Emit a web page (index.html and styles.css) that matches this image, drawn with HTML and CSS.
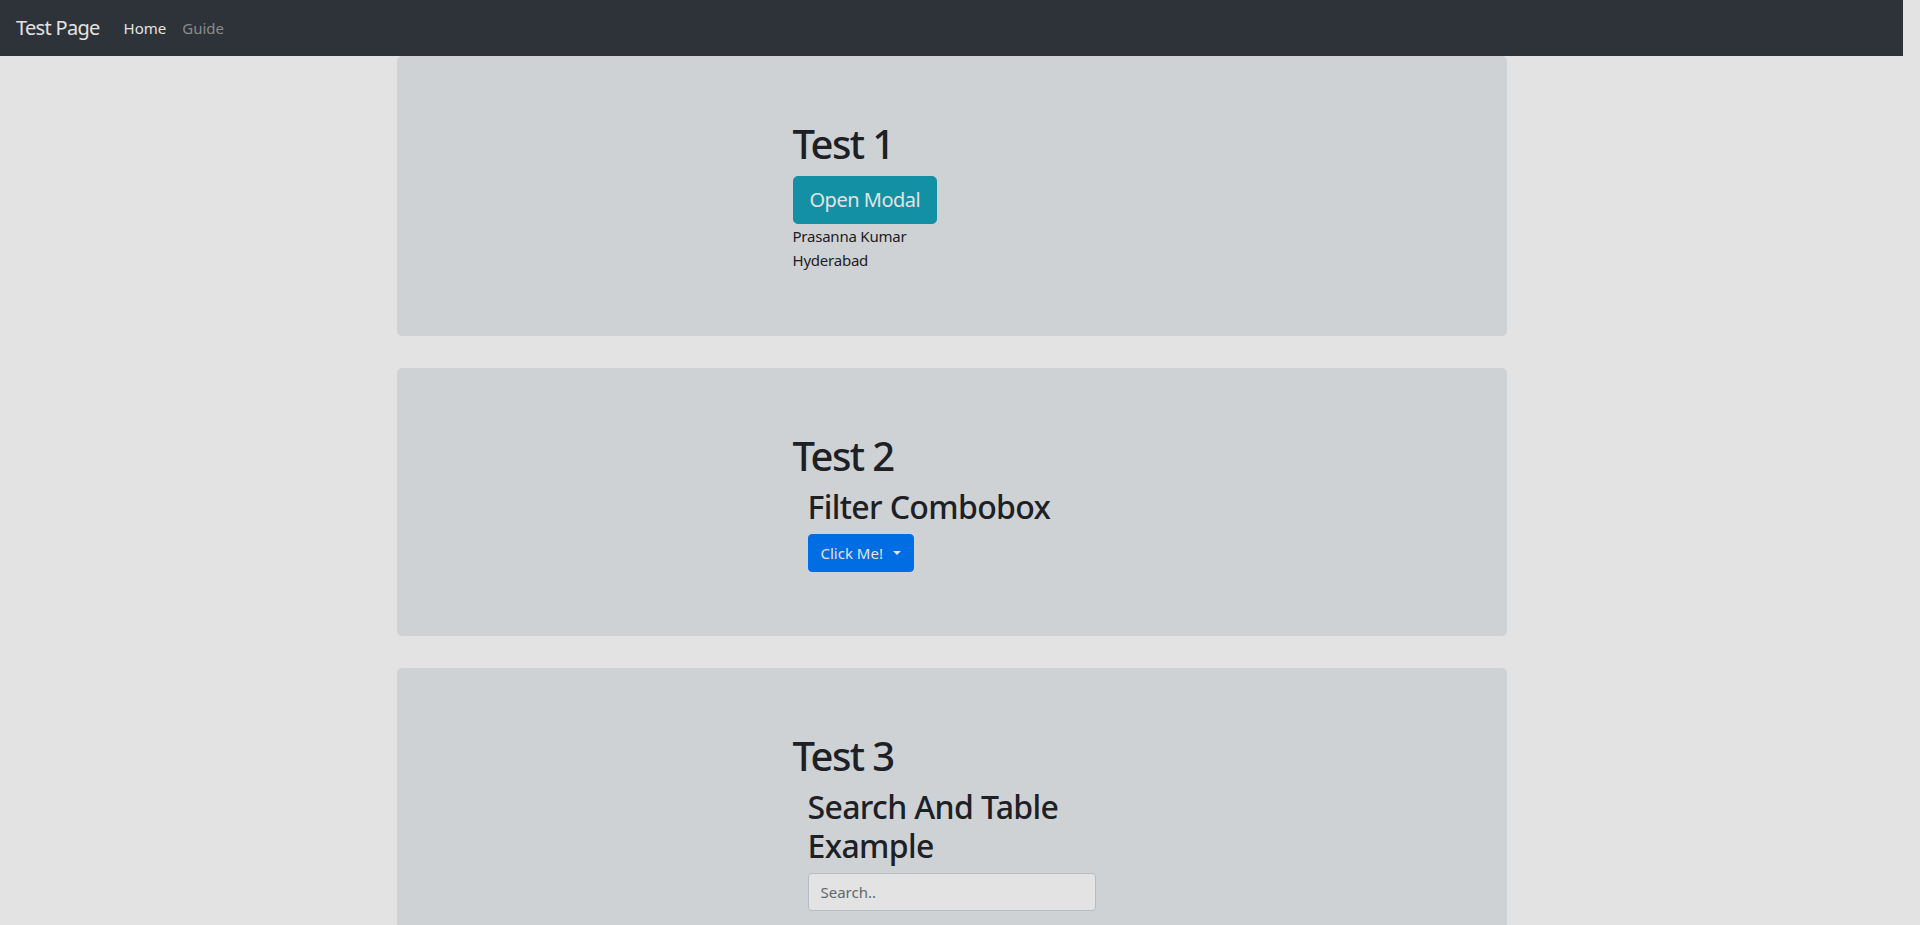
FILE: index.html
```html
<!DOCTYPE html>
<html lang="en">
<head>
<meta charset="utf-8">
<title>Test Page</title>
<link rel="stylesheet" href="styles.css">
</head>
<body>
<div class="page">
  <nav class="navbar">
    <a class="brand" href="#">Test Page</a>
    <ul class="nav">
      <li><a class="nav-link active" href="#">Home</a></li>
      <li><a class="nav-link" href="#">Guide</a></li>
    </ul>
  </nav>
  <main class="container">
    <section class="jumbotron">
      <div class="jumbo-body">
        <h1 class="title">Test 1</h1>
        <button class="btn btn-info btn-lg">Open Modal</button>
        <div class="info-text">Prasanna Kumar</div>
        <div class="info-text">Hyderabad</div>
      </div>
    </section>
    <section class="jumbotron">
      <div class="jumbo-body">
        <h1 class="title">Test 2</h1>
        <div class="sub">
          <h2 class="subtitle">Filter Combobox</h2>
          <button class="btn btn-primary dropdown-toggle">Click Me!</button>
        </div>
      </div>
    </section>
    <section class="jumbotron">
      <div class="jumbo-body">
        <h1 class="title">Test 3</h1>
        <div class="sub">
          <h2 class="subtitle">Search And Table Example</h2>
          <input class="search" type="text" placeholder="Search..">
        </div>
      </div>
    </section>
  </main>
</div>
</body>
</html>
```
FILE: styles.css
```css
html, body {
  margin: 0;
  padding: 0;
}
body {
  background: #e3e3e3;
  font-family: "Noto Sans", "Open Sans", sans-serif;
  font-size: 16px;
  line-height: 1.5;
  color: #1d2024;
}
.page {
  width: 1903px;
}
.navbar {
  display: flex;
  align-items: center;
  height: 56px;
  box-sizing: border-box;
  padding: 8px 16px;
  background: #2e3339;
}
.brand {
  font-size: 20px;
  line-height: 30px;
  letter-spacing: -0.035em;
  color: #e3e3e3;
  text-decoration: none;
  margin-right: 16px;
}
.nav {
  display: flex;
  list-style: none;
  margin: 0;
  padding: 0;
}
.nav-link {
  display: block;
  padding: 8px;
  font-size: 15px;
  line-height: 24px;
  color: #898c8e;
  text-decoration: none;
}
.nav-link.active {
  color: #e3e3e3;
}
.container {
  width: 1110px;
  margin: 0 auto;
}
.jumbotron {
  background: #cfd2d5;
  border-radius: 4.8px;
  padding: 64px 32px;
  margin-bottom: 32px;
}
.jumbo-body {
  margin-left: 364px;
  width: 318px;
}
.title {
  font-size: 40px;
  font-weight: 500;
  line-height: 1.2;
  letter-spacing: -0.04em;
  margin: 0 0 8px;
}
.sub {
  padding: 0 15px;
}
.subtitle {
  font-size: 32px;
  font-weight: 500;
  line-height: 1.2;
  letter-spacing: -0.02em;
  margin: 0 0 8px;
}
.btn {
  display: inline-block;
  font-family: inherit;
  border: 1px solid transparent;
  border-radius: 4px;
  padding: 6px 12px;
  font-size: 15px;
  line-height: 24px;
  color: #e3e3e3;
  cursor: pointer;
}
.btn-lg {
  padding: 8px 16px;
  font-size: 20px;
  line-height: 30px;
  letter-spacing: -0.025em;
  border-radius: 4.8px;
}
.btn-info {
  background: #1490a4;
  border-color: #1490a4;
}
.btn-primary {
  background: #006de3;
  border-color: #006de3;
}
.dropdown-toggle::after {
  content: "";
  display: inline-block;
  margin-left: 10px;
  vertical-align: 4px;
  border-top: 4.8px solid;
  border-right: 4.8px solid transparent;
  border-left: 4.8px solid transparent;
  border-bottom: 0;
}
.info-text {
  font-size: 15px;
  line-height: 24px;
  letter-spacing: -0.015em;
}
.search {
  display: block;
  box-sizing: border-box;
  width: 288px;
  height: 38px;
  padding: 6px 12px;
  font-family: inherit;
  font-size: 15px;
  color: #44494e;
  background: #e3e3e3;
  border: 1px solid #b7bdc2;
  border-radius: 4px;
}
.search::placeholder {
  color: #60686f;
}
```
